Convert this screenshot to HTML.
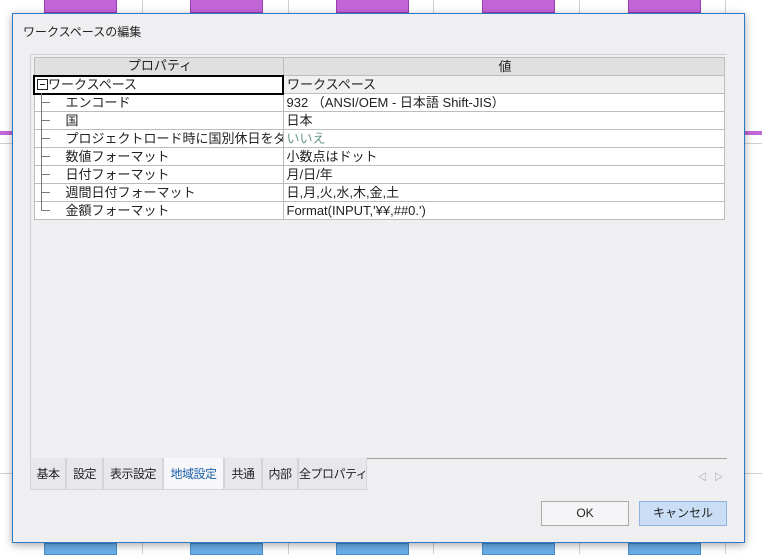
<!DOCTYPE html>
<html><head><meta charset="utf-8"><style>
*{margin:0;padding:0;box-sizing:border-box}
body{width:762px;height:554px;position:relative;background:#fff;overflow:hidden;font-family:"Liberation Sans","Noto Sans CJK JP",sans-serif;color:#222}
.a{position:absolute}
.pb{background:#c266d8;border:1px solid #9a3fb2;top:-1px;height:14px;width:73px}
.bb{background:#6aaee8;border:1px solid #4a8ccc;top:543px;height:12px;width:73px}
.vl{width:1px;background:#d0d0d0;top:0;height:554px}
#dlg{left:12px;top:13px;width:733px;height:530px;background:#efeff2;border:1px solid #2b79c7;box-shadow:0 2px 8px rgba(0,0,0,.35)}
table{border-collapse:collapse;font-size:13px;table-layout:fixed}
td{border:1px solid #bcbcbc;height:18px;padding:0 0 0 3px;white-space:nowrap;overflow:hidden;line-height:16px;background:#fff}
.tab{position:absolute;top:458px;height:32px;border:1px solid #d4d4da;border-top:none;background:#e8e8ec;font-size:12px;line-height:32px;text-align:center;white-space:nowrap;overflow:hidden;letter-spacing:-0.5px}
.btn{position:absolute;top:501px;width:88px;height:25px;border:1px solid #aaa;font-size:12px;text-align:center;line-height:23px}
</style></head><body>
<div class="a pb" style="left:44px"></div><div class="a pb" style="left:190px"></div><div class="a pb" style="left:336px"></div><div class="a pb" style="left:482px"></div><div class="a pb" style="left:628px"></div>
<div class="a bb" style="left:44px"></div><div class="a bb" style="left:190px"></div><div class="a bb" style="left:336px"></div><div class="a bb" style="left:482px"></div><div class="a bb" style="left:628px"></div>
<div class="a vl" style="left:142px"></div><div class="a vl" style="left:288px"></div><div class="a vl" style="left:433px"></div><div class="a vl" style="left:579px"></div><div class="a vl" style="left:725px"></div>
<div class="a" style="left:0;top:131px;width:762px;height:4px;background:#c266d8"></div>
<div class="a" style="left:0;top:143px;width:762px;height:1px;background:#d0d0d0"></div>
<div class="a" style="left:0;top:473px;width:762px;height:1px;background:#d0d0d0"></div>
<div id="dlg" class="a"></div>
<div class="a" style="left:23px;top:23px;font-size:12px">ワークスペースの編集</div>
<div class="a" style="left:30px;top:54px;width:697px;height:405px;border-top:1px solid #d0d0dc;border-left:1px solid #d0d0dc;background:#efeff2"></div>
<table class="a" style="left:33px;top:57px;width:690px">
<colgroup><col style="width:249px"><col style="width:441px"></colgroup>
<tr><td style="background:#e0e0e0;text-align:center">プロパティ</td><td style="background:#e0e0e0;text-align:center">値</td></tr>
<tr><td style="border:2px solid #000;padding-left:2px"><span style="display:inline-block;width:11px;height:11px;border:1px solid #222;position:relative;vertical-align:-1px"><span style="position:absolute;left:2px;top:4px;width:5px;height:1px;background:#222"></span></span>ワークスペース</td><td style="background:#f0f0f0">ワークスペース</td></tr>
<tr><td style="padding-left:31px">エンコード</td><td>932 （ANSI/OEM - 日本語 Shift-JIS）</td></tr>
<tr><td style="padding-left:31px">国</td><td>日本</td></tr>
<tr><td style="padding-left:31px">プロジェクトロード時に国別休日をダ</td><td style="color:#6a9a8a">いいえ</td></tr>
<tr><td style="padding-left:31px">数値フォーマット</td><td>小数点はドット</td></tr>
<tr><td style="padding-left:31px">日付フォーマット</td><td>月/日/年</td></tr>
<tr><td style="padding-left:31px">週間日付フォーマット</td><td>日,月,火,水,木,金,土</td></tr>
<tr><td style="padding-left:31px">金額フォーマット</td><td>Format(INPUT,'¥¥,##0.')</td></tr>
</table>
<div class="a" style="left:41px;top:93px;width:1px;height:117px;background:#777"></div>
<div class="a" style="left:41px;top:102px;width:9px;height:1px;background:#777;box-shadow:0 18px #777,0 36px #777,0 54px #777,0 72px #777,0 90px #777,0 108px #777"></div>
<div class="a" style="left:30px;top:458px;width:697px;height:1px;background:#a0a0a0"></div>
<div class="tab" style="left:30px;width:36px">基本</div>
<div class="tab" style="left:66px;width:37px">設定</div>
<div class="tab" style="left:103px;width:60px">表示設定</div>
<div class="tab" style="left:163px;width:61px;background:#f7f7f9;color:#1a5fa8">地域設定</div>
<div class="tab" style="left:224px;width:38px">共通</div>
<div class="tab" style="left:262px;width:36px">内部</div>
<div class="tab" style="left:298px;width:69px">全プロパティ</div>
<div class="a" style="left:698px;top:470px;font-size:9px;color:#888">◁</div>
<div class="a" style="left:714px;top:470px;font-size:9px;color:#888">▷</div>
<div class="btn" style="left:541px;background:#f5f5f7">OK</div>
<div class="btn" style="left:639px;background:#c9def5;border-color:#8fb3dc">キャンセル</div>
</body></html>
